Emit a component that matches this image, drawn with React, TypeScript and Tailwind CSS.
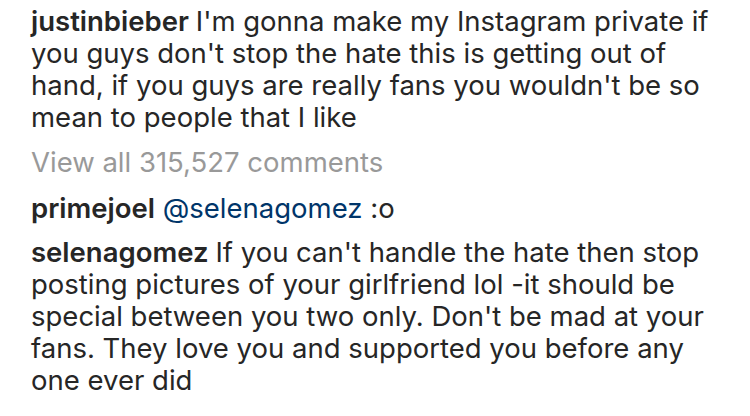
const Comment = ({ user, lines }: { user: string; lines: React.ReactNode[] }) => (
  <p className="leading-[32px]">
    {lines.map((line, i) => (
      <span key={i} className="block whitespace-nowrap">
        {i === 0 && <span className="font-semibold">{user} </span>}
        {line}
      </span>
    ))}
  </p>
);

export default function App() {
  return (
    <div
      className="w-[750px] h-[416px] bg-white text-[#262626] text-[27.5px] pl-[31px] pt-[5px] overflow-hidden"
      style={{ fontFamily: 'Inter, "Noto Sans", sans-serif' }}
    >
      <Comment
        user="justinbieber"
        lines={[
          "I'm gonna make my Instagram private if",
          "you guys don't stop the hate this is getting out of",
          "hand, if you guys are really fans you wouldn't be so",
          'mean to people that I like',
        ]}
      />
      <div className="mt-[13px] leading-[32px] text-[#999999]">View all 315,527 comments</div>
      <div className="mt-[14px] leading-[32px]">
        <span className="font-semibold">primejoel</span>{' '}
        <span className="text-[#003569]">@selenagomez</span> :o
      </div>
      <div className="mt-[12px]">
        <Comment
          user="selenagomez"
          lines={[
            "If you can't handle the hate then stop",
            'posting pictures of your girlfriend lol -it should be',
            "special between you two only. Don't be mad at your",
            'fans. They love you and supported you before any',
            'one ever did',
          ]}
        />
      </div>
    </div>
  );
}
